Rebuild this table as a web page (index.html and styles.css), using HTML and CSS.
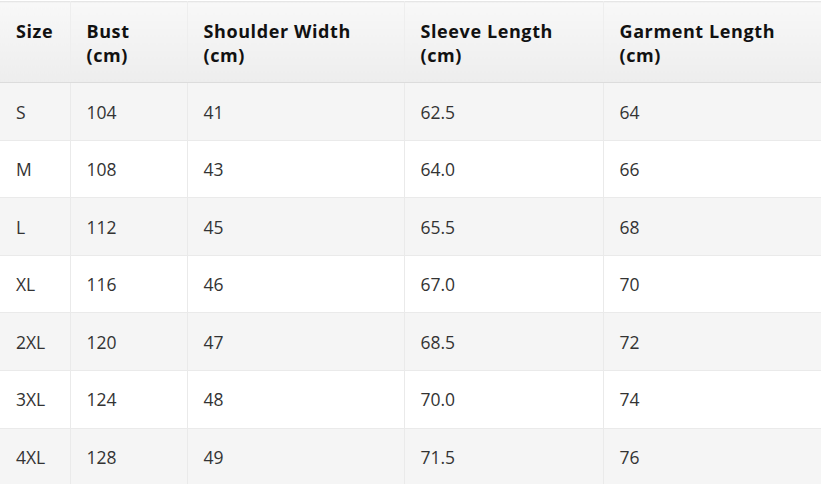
FILE: index.html
```html
<!DOCTYPE html>
<html lang="en">
<head>
<meta charset="utf-8">
<title>Size Chart</title>
<link rel="stylesheet" href="styles.css">
</head>
<body>
<div class="wrap">
<table class="size-table">
  <colgroup>
    <col class="c-size">
    <col class="c-bust">
    <col class="c-shoulder">
    <col class="c-sleeve">
    <col class="c-garment">
  </colgroup>
  <thead>
    <tr>
      <th>Size</th>
      <th>Bust<br>(cm)</th>
      <th>Shoulder Width<br>(cm)</th>
      <th>Sleeve Length<br>(cm)</th>
      <th>Garment Length<br>(cm)</th>
    </tr>
  </thead>
  <tbody>
    <tr><td>S</td><td>104</td><td>41</td><td>62.5</td><td>64</td></tr>
    <tr><td>M</td><td>108</td><td>43</td><td>64.0</td><td>66</td></tr>
    <tr><td>L</td><td>112</td><td>45</td><td>65.5</td><td>68</td></tr>
    <tr><td>XL</td><td>116</td><td>46</td><td>67.0</td><td>70</td></tr>
    <tr><td>2XL</td><td>120</td><td>47</td><td>68.5</td><td>72</td></tr>
    <tr><td>3XL</td><td>124</td><td>48</td><td>70.0</td><td>74</td></tr>
    <tr><td>4XL</td><td>128</td><td>49</td><td>71.5</td><td>76</td></tr>
  </tbody>
</table>
</div>
</body>
</html>
```

FILE: styles.css
```css
html, body {
  margin: 0;
  padding: 0;
  background: #ffffff;
  overflow: hidden;
}

.wrap {
  padding-top: 1px;
}

.size-table {
  width: 100%;
  border-collapse: collapse;
  table-layout: fixed;
  font-family: "Open Sans", "Noto Sans", sans-serif;
  border-top: 1px solid #e6e6e6;
}

.c-size { width: 70px; }
.c-bust { width: 117px; }
.c-shoulder { width: 217px; }
.c-sleeve { width: 199px; }

.size-table th {
  text-align: left;
  font-size: 18px;
  font-weight: 700;
  letter-spacing: 0.6px;
  color: #111111;
  line-height: 24px;
  padding: 17px 16px 15px 16px;
  background: linear-gradient(to bottom, #f8f8f8, #ededed);
  border-bottom: 1px solid #dcdcdc;
  border-left: 1px solid #eeeeee;
  vertical-align: top;
  white-space: nowrap;
}

.size-table td {
  font-size: 17.5px;
  color: #333333;
  line-height: 25.6px;
  padding: 16.5px 16px 14.5px 16px;
  border-bottom: 1px solid #eaeaea;
  border-left: 1px solid #eaeaea;
}

.size-table th:first-child,
.size-table td:first-child {
  border-left: none;
}

.size-table tbody tr:nth-child(odd) td {
  background: #f5f5f5;
}

.size-table tbody tr:nth-child(even) td {
  background: #ffffff;
}
```
